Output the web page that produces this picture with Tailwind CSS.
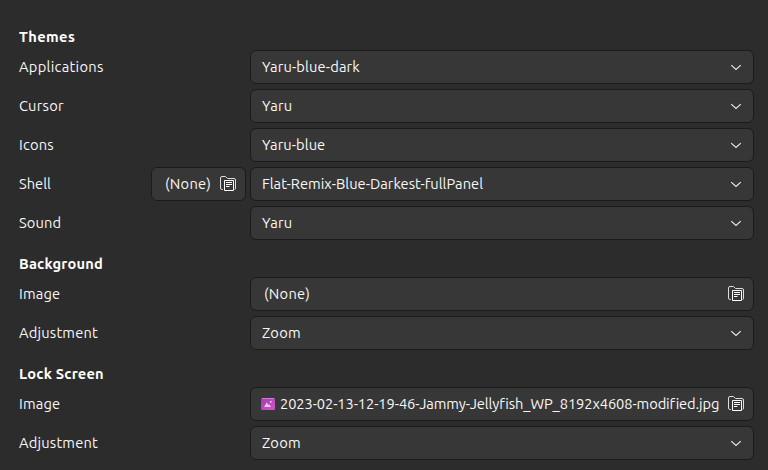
<!DOCTYPE html>
<html lang="en">
<head>
<meta charset="utf-8">
<title>Appearance</title>
<script src="https://cdn.jsdelivr.net/npm/@tailwindcss/browser@4"></script>
</head>
<body class="h-[470px] w-[768px] overflow-hidden bg-[#2c2c2c] pt-6 pr-[14px] pl-[19px] font-['Ubuntu','Noto_Sans',sans-serif] text-[14.667px] whitespace-nowrap text-[#f7f7f7]">
<svg class="hidden">
  <symbol id="chev" viewBox="0 0 16 16"><path d="M3.2 6.2 L8 10.4 L12.8 6.2" fill="none" stroke="#eeeeee" stroke-width="1.1"/></symbol>
  <symbol id="open" viewBox="0 0 18 16">
    <path d="M3.8 13.5H3Q1.5 13.5 1.5 12V2Q1.5 .5 3 .5H6.5L8.5 2.5H15Q16.5 2.5 16.5 4V12Q16.5 13.5 15.5 13.5" fill="none" stroke="#dddddd" stroke-width="1"/>
    <path d="M5.5 4.5H14.5V14.5H5.5Z" fill="#373737" stroke="#ffffff"/>
    <path d="M7 6.5H13M7 8.5H13M7 10.5H10.5" stroke="#ffffff"/>
  </symbol>
</svg>
<main>
  <section>
    <h2 class="h-[26px] leading-[26px] font-bold text-white"><span class="tracking-[0.4px]">Themes</span></h2>
    <div class="flex flex-col gap-[5px]">
      <div class="flex h-[34px] items-center"><span class="w-[231px] tracking-[0.3px]">Applications</span><button class="flex h-[34px] flex-1 items-center justify-between rounded-[6px] border border-[#1b1b1b] bg-[#373737] pr-[9px] pl-[11px]"><span class="tracking-[0.14px]">Yaru-blue-dark</span><svg class="size-4"><use href="#chev"/></svg></button></div>
      <div class="flex h-[34px] items-center"><span class="w-[231px] tracking-[0.25px]">Cursor</span><button class="flex h-[34px] flex-1 items-center justify-between rounded-[6px] border border-[#1b1b1b] bg-[#373737] pr-[9px] pl-[11px]"><span class="tracking-[0.2px]">Yaru</span><svg class="size-4"><use href="#chev"/></svg></button></div>
      <div class="flex h-[34px] items-center"><span class="w-[231px] tracking-[0.2px]">Icons</span><button class="flex h-[34px] flex-1 items-center justify-between rounded-[6px] border border-[#1b1b1b] bg-[#373737] pr-[9px] pl-[11px]"><span class="tracking-[0.08px]">Yaru-blue</span><svg class="size-4"><use href="#chev"/></svg></button></div>
      <div class="flex h-[34px] items-center"><span class="w-[132px]">Shell</span><button class="mr-1 flex h-[34px] w-[95px] items-center justify-between rounded-[6px] border border-[#1b1b1b] bg-[#373737] pr-2 pl-[13px]"><span class="tracking-[0.25px]">(None)</span><svg class="h-4 w-[18px]"><use href="#open"/></svg></button><button class="flex h-[34px] flex-1 items-center justify-between rounded-[6px] border border-[#1b1b1b] bg-[#373737] pr-[9px] pl-[11px]"><span class="tracking-[0.02px]">Flat-Remix-Blue-Darkest-fullPanel</span><svg class="size-4"><use href="#chev"/></svg></button></div>
      <div class="flex h-[34px] items-center"><span class="w-[231px] tracking-[0.1px]">Sound</span><button class="flex h-[34px] flex-1 items-center justify-between rounded-[6px] border border-[#1b1b1b] bg-[#373737] pr-[9px] pl-[11px]"><span class="tracking-[0.2px]">Yaru</span><svg class="size-4"><use href="#chev"/></svg></button></div>
    </div>
  </section>
  <section class="mt-[11px]">
    <h2 class="h-[26px] leading-[26px] font-bold text-white"><span class="tracking-[0.22px]">Background</span></h2>
    <div class="flex flex-col gap-[5px]">
      <div class="flex h-[34px] items-center"><span class="w-[231px] tracking-[0.15px]">Image</span><button class="flex h-[34px] flex-1 items-center justify-between rounded-[6px] border border-[#1b1b1b] bg-[#373737] pr-2 pl-[13px]"><span class="tracking-[0.25px]">(None)</span><svg class="h-4 w-[18px]"><use href="#open"/></svg></button></div>
      <div class="flex h-[34px] items-center"><span class="w-[231px] tracking-[0.2px]">Adjustment</span><button class="flex h-[34px] flex-1 items-center justify-between rounded-[6px] border border-[#1b1b1b] bg-[#373737] pr-[9px] pl-[11px]"><span class="tracking-[0.2px]">Zoom</span><svg class="size-4"><use href="#chev"/></svg></button></div>
    </div>
  </section>
  <section class="mt-[11px]">
    <h2 class="h-[26px] leading-[26px] font-bold text-white"><span class="tracking-[0.2px]">Lock Screen</span></h2>
    <div class="flex flex-col gap-[5px]">
      <div class="flex h-[34px] items-center"><span class="w-[231px] tracking-[0.15px]">Image</span><button class="flex h-[34px] flex-1 items-center rounded-[6px] border border-[#1b1b1b] bg-[#373737] pr-2 pl-[10px]"><svg class="mr-[5px] h-3 w-[14px] shrink-0" viewBox="0 0 14 12"><defs><linearGradient id="g" x2="1" y2="1"><stop stop-color="#a03ab0"/><stop offset="1" stop-color="#d457c4"/></linearGradient></defs><rect width="14" height="12" rx="1.5" fill="url(#g)"/><path d="M1 .5H13" stroke="#d67bdb"/><path d="M3 9L5.8 4.5L7.5 7L8.3 6.2L10 9Z" fill="#f0c5ee"/><rect x="9" y="3" width="1.6" height="1.6" fill="#f0c5ee"/></svg><span class="tracking-[-0.088px]">2023-02-13-12-19-46-Jammy-Jellyfish_WP_8192x4608-modified.jpg</span><svg class="ml-auto h-4 w-[18px] shrink-0"><use href="#open"/></svg></button></div>
      <div class="flex h-[34px] items-center"><span class="w-[231px] tracking-[0.2px]">Adjustment</span><button class="flex h-[34px] flex-1 items-center justify-between rounded-[6px] border border-[#1b1b1b] bg-[#373737] pr-[9px] pl-[11px]"><span class="tracking-[0.2px]">Zoom</span><svg class="size-4"><use href="#chev"/></svg></button></div>
    </div>
  </section>
</main>
</body>
</html>
